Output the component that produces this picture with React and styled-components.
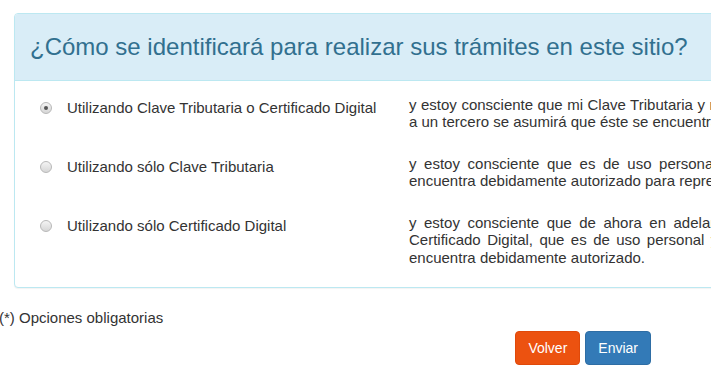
import React from 'react'
import styled, { createGlobalStyle } from 'styled-components'

const GlobalStyle = createGlobalStyle`
  html, body {
    margin: 0;
    padding: 0;
    background: #fff;
    overflow: hidden;
  }
  body {
    font-family: "Liberation Sans", Arial, sans-serif;
    color: #333;
  }
`

const options = [
    {
        id: 'ambos',
        label: 'Utilizando Clave Tributaria o Certificado Digital',
        text: 'y estoy consciente que mi Clave Tributaria y mi Certificado Digital son de uso personal, y si los entrego a un tercero se asumirá que éste se encuentra debidamente autorizado.',
        checked: true,
    },
    {
        id: 'clave',
        label: 'Utilizando sólo Clave Tributaria',
        text: 'y estoy consciente que es de uso personal y si la entrego a un tercero se asumirá que éste se encuentra debidamente autorizado para representarme.',
    },
    {
        id: 'certificado',
        label: 'Utilizando sólo Certificado Digital',
        text: 'y estoy consciente que de ahora en adelante sólo podré ingresar a los servicios del sitio con mi Certificado Digital, que es de uso personal y si yo lo entrego a un tercero, se asumirá que éste se encuentra debidamente autorizado.',
    },
]

const App = () => {
    return (
        <Page>
            <GlobalStyle />
            <Panel>
                <PanelHeading>
                    <PanelTitle>¿Cómo se identificará para realizar sus trámites en este sitio?</PanelTitle>
                </PanelHeading>
                <PanelBody>
                    {options.map((opt) => (
                        <OptionRow key={opt.id}>
                            <OptionLabel>
                                <Radio type="radio" name="modo" defaultChecked={opt.checked} />
                                <span>{opt.label}</span>
                            </OptionLabel>
                            <OptionText>{opt.text}</OptionText>
                        </OptionRow>
                    ))}
                </PanelBody>
            </Panel>
            {/* End .panel */}
            <Note>(*) Opciones obligatorias</Note>
            <Actions>
                <Button $variant="back">Volver</Button>
                <Button $variant="primary">Enviar</Button>
            </Actions>
        </Page>
    )
}

const Page = styled.div`
  width: 1200px;
  padding-top: 13px;
  margin-left: -1px;
`

const Panel = styled.section`
  margin-left: 15px;
  width: 1140px;
  border: 1px solid #bce8f1;
  border-radius: 4px;
  background: #fff;
  box-shadow: 0 1px 1px rgba(0, 0, 0, 0.05);
`

const PanelHeading = styled.div`
  background: #d9edf7;
  border-bottom: 1px solid #bce8f1;
  border-radius: 3px 3px 0 0;
  padding: 20px 15px;
`

const PanelTitle = styled.h3`
  margin: 0;
  font-size: 24px;
  line-height: 26px;
  font-weight: 400;
  color: #31708f;
`

const PanelBody = styled.div`
  padding: 15px 15px 14px 25px;
`

const OptionRow = styled.div`
  display: flex;
  align-items: flex-start;
  min-height: 59px;
`

const OptionLabel = styled.label`
  display: flex;
  align-items: center;
  gap: 15px;
  width: 369px;
  flex-shrink: 0;
  padding-top: 3px;
  font-size: 15px;
  line-height: 17px;
  color: #333;
`

const Radio = styled.input`
  appearance: none;
  margin: 0;
  width: 12px;
  height: 12px;
  border-radius: 50%;
  border: 1px solid #b8b8b8;
  background: linear-gradient(#f4f4f4, #d6d6d6);
  position: relative;
  flex-shrink: 0;
  box-sizing: border-box;

  &:checked::after {
    content: '';
    position: absolute;
    left: 3px;
    top: 3px;
    width: 4px;
    height: 4px;
    border-radius: 50%;
    background: #555;
  }
`

const OptionText = styled.p`
  margin: 0;
  width: 690px;
  flex-shrink: 0;
  font-size: 15px;
  line-height: 17.3px;
  text-align: justify;
  color: #333;
`

const Note = styled.p`
  margin: 21px 0 0;
  font-size: 15px;
  line-height: 17px;
  color: #333;
`

const Actions = styled.div`
  width: 652px;
  display: flex;
  justify-content: flex-end;
  gap: 5px;
  margin-top: 5px;
`

const Button = styled.button`
  font-family: "Liberation Sans", Arial, sans-serif;
  font-size: 14px;
  line-height: 20px;
  padding: 6px 12px;
  border-radius: 4px;
  color: #fff;
  cursor: pointer;
  border: 1px solid ${(p) => (p.$variant === 'back' ? '#e0490a' : '#2e6da4')};
  background: ${(p) => (p.$variant === 'back' ? '#ec5210' : '#337ab7')};
`

export default App
